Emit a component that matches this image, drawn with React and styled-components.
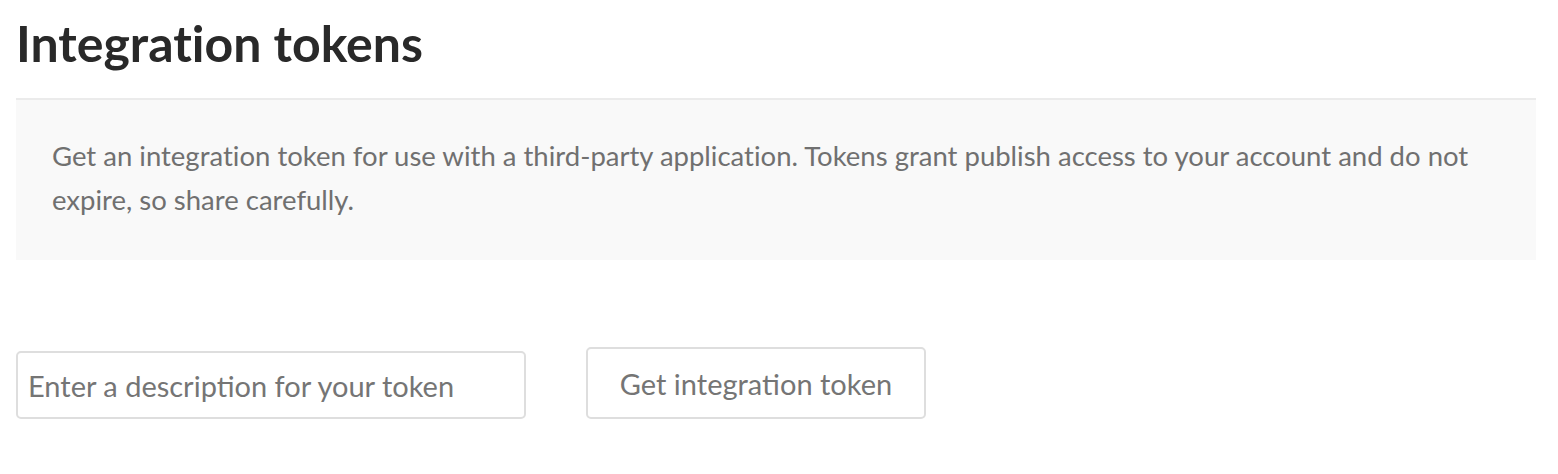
import React from 'react';
import styled, { createGlobalStyle } from 'styled-components';

const GlobalStyle = createGlobalStyle`
  html, body {
    margin: 0;
    padding: 0;
    background: #fff;
  }
  body {
    font-family: 'Lato', 'Noto Sans', sans-serif;
    font-variant-ligatures: none;
    -webkit-font-smoothing: antialiased;
  }
`;

const Page = styled.div`
  padding: 0 22px 0 16px;
`;

const Title = styled.h1`
  margin: 0;
  padding-top: 13px;
  height: 98px;
  box-sizing: border-box;
  font-size: 50px;
  line-height: 60px;
  font-weight: 700;
  color: #292929;
`;

const InfoBox = styled.div`
  border-top: 2px solid #ebebeb;
  background: #f9f9f9;
  padding: 34px 36px 38px;
  font-size: 27.5px;
  line-height: 44px;
  color: #707070;
`;

const Form = styled.div`
  display: flex;
  align-items: flex-end;
  gap: 60px;
  margin-top: 87px;
`;

const TokenInput = styled.input`
  box-sizing: border-box;
  width: 510px;
  height: 68px;
  border: 2px solid #dedede;
  border-radius: 5px;
  padding: 0 10px;
  font-family: inherit;
  font-size: 29px;
  color: #333;
  outline: none;
  &::placeholder {
    color: #757575;
  }
`;

const Button = styled.button`
  box-sizing: border-box;
  width: 340px;
  height: 72px;
  border: 2px solid #dedede;
  border-radius: 5px;
  background: #fff;
  font-family: inherit;
  font-size: 29px;
  color: #757575;
  cursor: pointer;
`;

export default function App() {
  return (
    <>
      <GlobalStyle />
      <Page>
        <Title>Integration tokens</Title>
        <InfoBox>
          Get an integration token for use with a third-party application. Tokens grant publish access to your account and do not expire, so share carefully.
        </InfoBox>
        <Form>
          <TokenInput placeholder="Enter a description for your token" />
          <Button>Get integration token</Button>
        </Form>
      </Page>
    </>
  );
}
